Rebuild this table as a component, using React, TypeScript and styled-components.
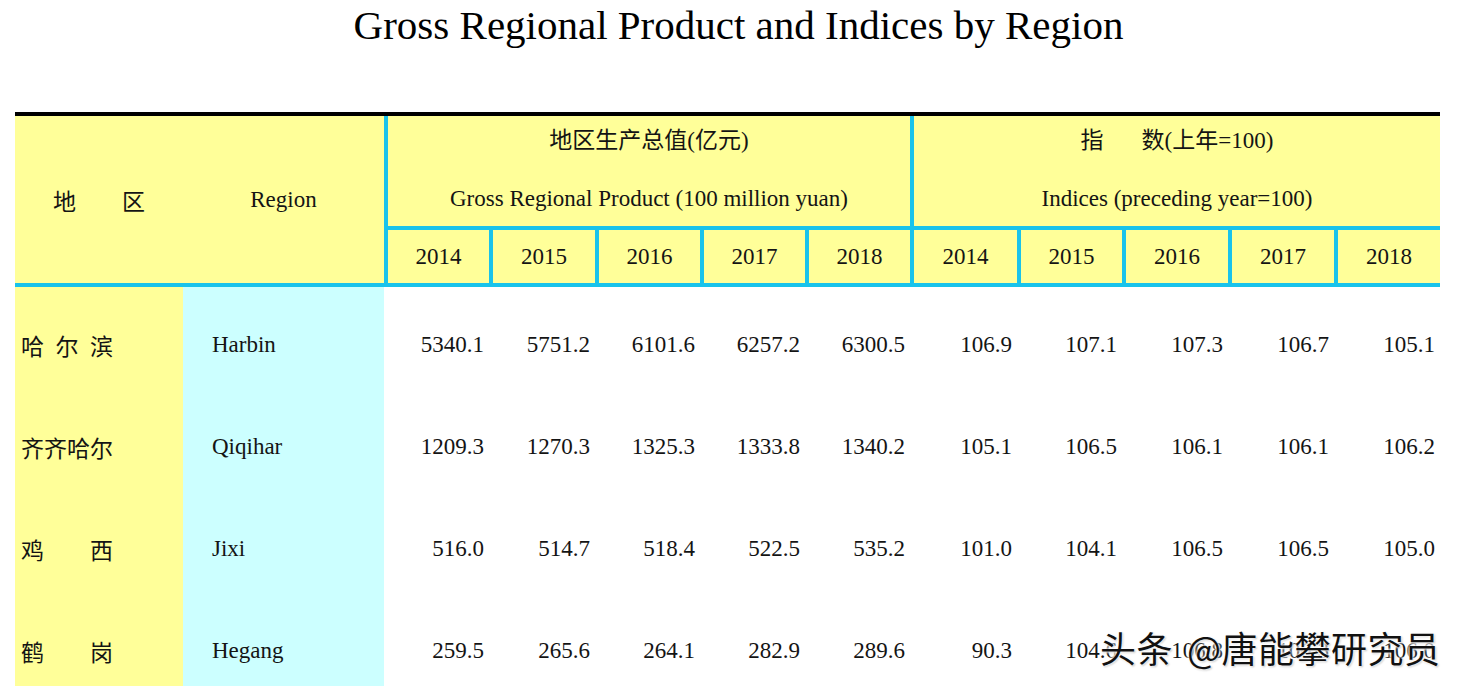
import React from "react";
import styled, { createGlobalStyle } from "styled-components";

const GlobalStyle = createGlobalStyle`
  html, body {
    margin: 0;
    padding: 0;
    overflow: hidden;
    background: #ffffff;
  }
`;

const LINE = "#19c3eb";
const YELLOW = "#ffff99";
const AQUA = "#ccffff";
const SERIF = `"Liberation Serif", "Noto Sans CJK SC", serif`;

const Page = styled.div`
  position: relative;
  width: 1461px;
  height: 686px;
  padding: 0 21px 0 15px;
  box-sizing: border-box;
  font-family: ${SERIF};
  color: #141414;
`;

const Title = styled.h1`
  margin: 0;
  height: 112px;
  padding: 0 0 0 22px;
  box-sizing: border-box;
  text-align: center;
  font-size: 41px;
  line-height: 50px;
  font-weight: normal;
  color: #000;
`;

// column widths measured off the reference; sums to 1425px
const Grid = styled.div`
  display: grid;
  grid-template-columns: 168px 201px 105px 106px 105px 105px 105px 107px 105px 106px 106px 106px;
`;

const Head = styled(Grid)`
  grid-template-rows: 114px 53px;
  background: ${YELLOW};
  border-top: 4px solid #000;
  border-bottom: 4px solid ${LINE};
  font-size: 23px;
`;

const HeadCell = styled.div<{ $col: string; $row: string; $left?: boolean; $bottom?: boolean }>`
  grid-column: ${(p) => p.$col};
  grid-row: ${(p) => p.$row};
  border-left: ${(p) => (p.$left ? `4px solid ${LINE}` : "none")};
  border-bottom: ${(p) => (p.$bottom ? `4px solid ${LINE}` : "none")};
  display: flex;
  align-items: center;
  justify-content: center;
`;

const GroupCell = styled(HeadCell)`
  flex-direction: column;
  justify-content: flex-start;
  padding-top: 12px;
  gap: 32px;
  line-height: 26px;
`;

const Spread = styled.div<{ $w: number }>`
  width: ${(p) => p.$w}px;
  display: flex;
  justify-content: space-between;
`;

const Gap = styled.span<{ $w: number }>`
  display: inline-block;
  width: ${(p) => p.$w}px;
`;

const Row = styled(Grid)`
  height: 102px;
  font-size: 23px;
`;

const NameCell = styled.div<{ $bg: string; $pad: number }>`
  background: ${(p) => p.$bg};
  display: flex;
  align-items: center;
  padding: 14px 0 0 ${(p) => p.$pad}px;
`;

const NumCell = styled.div`
  display: flex;
  align-items: center;
  justify-content: flex-end;
  padding: 14px 5px 0 0;
`;

const Watermark = styled.div`
  position: absolute;
  left: 1100px;
  top: 622px;
  font-family: "Noto Sans CJK SC", sans-serif;
  font-size: 36px;
  letter-spacing: 0.5px;
  line-height: 50px;
  color: #111;
  white-space: nowrap;
  text-shadow: 0 0 3px #fff, 0 0 3px #fff, 0 0 4px #fff, 1px 1px 2px rgba(0, 0, 0, 0.4);
`;

const years = ["2014", "2015", "2016", "2017", "2018"];

const rows = [
  { cn: ["哈", "尔", "滨"], en: "Harbin", v: ["5340.1", "5751.2", "6101.6", "6257.2", "6300.5", "106.9", "107.1", "107.3", "106.7", "105.1"] },
  { cn: ["齐", "齐", "哈", "尔"], en: "Qiqihar", v: ["1209.3", "1270.3", "1325.3", "1333.8", "1340.2", "105.1", "106.5", "106.1", "106.1", "106.2"] },
  { cn: ["鸡", "西"], en: "Jixi", v: ["516.0", "514.7", "518.4", "522.5", "535.2", "101.0", "104.1", "106.5", "106.5", "105.0"] },
  { cn: ["鹤", "岗"], en: "Hegang", v: ["259.5", "265.6", "264.1", "282.9", "289.6", "90.3", "104.6", "106.8", "106.3", "106.0"] },
];

export default function App() {
  return (
    <Page>
      <GlobalStyle />
      <Title>Gross Regional Product and Indices by Region</Title>
      <Head>
        <HeadCell $col="1" $row="1 / 3">
          <Spread $w={92}>
            <span>地</span>
            <span>区</span>
          </Spread>
        </HeadCell>
        <HeadCell $col="2" $row="1 / 3">Region</HeadCell>
        <GroupCell $col="3 / 8" $row="1" $left $bottom>
          <span>地区生产总值(亿元)</span>
          <span>Gross Regional Product (100 million yuan)</span>
        </GroupCell>
        <GroupCell $col="8 / 13" $row="1" $left $bottom>
          <span>
            指<Gap $w={38} />数(上年=100)
          </span>
          <span>Indices (preceding year=100)</span>
        </GroupCell>
        {[...years, ...years].map((y, i) => (
          <HeadCell key={i} $col={String(i + 3)} $row="2" $left>
            {y}
          </HeadCell>
        ))}
      </Head>
      {rows.map((r) => (
        <Row key={r.en}>
          <NameCell $bg={YELLOW} $pad={6}>
            <Spread $w={92}>
              {r.cn.map((c, i) => (
                <span key={i}>{c}</span>
              ))}
            </Spread>
          </NameCell>
          <NameCell $bg={AQUA} $pad={29}>
            {r.en}
          </NameCell>
          {r.v.map((v, i) => (
            <NumCell key={i}>{v}</NumCell>
          ))}
        </Row>
      ))}
      <Watermark>
        头条<Gap $w={14} />@唐能攀研究员
      </Watermark>
    </Page>
  );
}
